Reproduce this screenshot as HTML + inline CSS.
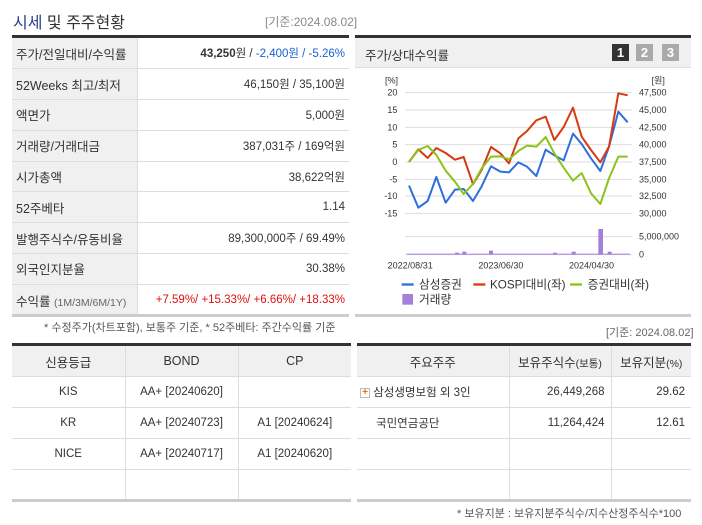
<!DOCTYPE html><html><head><meta charset="utf-8"><style>
*{margin:0;padding:0;box-sizing:border-box}
body{width:702px;height:525px;background:#fff;font-family:"Liberation Sans","Noto Sans CJK KR",sans-serif;font-size:12px;color:#333;position:relative;overflow:hidden}
.a{position:absolute}
table{border-collapse:collapse;position:absolute}
td{border-bottom:1px solid #ddd;height:30.8px;padding:0;white-space:nowrap}
.lt td.l{background:#f0f0f0;border-right:1px solid #ddd;padding-left:4px;font-size:12.5px;color:#333}
.lt td.r{text-align:right;padding-right:4px;font-size:11.5px}
.bt td{text-align:center;border-right:1px solid #ddd;font-size:11.5px}
.bt td:last-child{border-right:none}
.bt tr.h td{background:#f0f0f0;font-size:12.5px}
</style></head><body>
<div class="a" style="left:13px;top:9px;font-size:16px;color:#333"><span style="color:#2a3a8c">시세</span> 및 주주현황</div>
<div class="a" style="left:265px;top:13px;font-size:12px;color:#888">[기준:2024.08.02]</div>
<div class="a" style="left:12px;top:35px;width:337px;height:3px;background:#333"></div>
<table class="lt" style="left:12px;top:38px;width:337px">
<col style="width:125px"><col>
<tr><td class="l">주가/전일대비/수익률</td><td class="r"><b>43,250</b>원 / <span style="color:#1a5fd0">-2,400원 / -5.26%</span></td></tr>
<tr><td class="l">52Weeks 최고/최저</td><td class="r">46,150원 / 35,100원</td></tr>
<tr><td class="l">액면가</td><td class="r">5,000원</td></tr>
<tr><td class="l">거래량/거래대금</td><td class="r">387,031주 / 169억원</td></tr>
<tr><td class="l">시가총액</td><td class="r">38,622억원</td></tr>
<tr><td class="l">52주베타</td><td class="r">1.14</td></tr>
<tr><td class="l">발행주식수/유동비율</td><td class="r">89,300,000주 / 69.49%</td></tr>
<tr><td class="l">외국인지분율</td><td class="r">30.38%</td></tr>
<tr><td class="l" style="border-bottom:none">수익률 <span style="font-size:10.5px;color:#666">(1M/3M/6M/1Y)</span></td><td class="r" style="color:#e01010;border-bottom:none">+7.59%/ +15.33%/ +6.66%/ +18.33%</td></tr>
</table>
<div class="a" style="left:12px;top:314px;width:337px;height:3px;background:#ccc"></div>
<div class="a" style="left:44px;top:319px;font-size:11px;color:#555">* 수정주가(차트포함), 보통주 기준, * 52주베타: 주간수익률 기준</div>

<div class="a" style="left:355px;top:35px;width:336px;height:3px;background:#333"></div>
<div class="a" style="left:355px;top:38px;width:336px;height:30px;background:#f0f0f0;border-bottom:1px solid #ddd"></div>
<div class="a" style="left:365px;top:45px;font-size:12.5px">주가/상대수익률</div>
<div class="a" style="left:612px;top:44px;width:17px;height:17px;background:#333;color:#fff;font-weight:bold;text-align:center;line-height:17px;font-size:13px">1</div>
<div class="a" style="left:636px;top:44px;width:17px;height:17px;background:#aaa;color:#fff;font-weight:bold;text-align:center;line-height:17px;font-size:13px">2</div>
<div class="a" style="left:662px;top:44px;width:17px;height:17px;background:#aaa;color:#fff;font-weight:bold;text-align:center;line-height:17px;font-size:13px">3</div>
<svg class="a" style="left:355px;top:30px" width="347" height="280" viewBox="0 0 1041 840">
<g stroke="#ddd" stroke-width="3">
<line x1="150" x2="830" y1="188" y2="188"/><line x1="150" x2="830" y1="240" y2="240"/><line x1="150" x2="830" y1="292" y2="292"/><line x1="150" x2="830" y1="344" y2="344"/><line x1="150" x2="830" y1="396" y2="396"/><line x1="150" x2="830" y1="448" y2="448"/><line x1="150" x2="830" y1="498" y2="498"/><line x1="150" x2="830" y1="550" y2="550"/><line x1="150" x2="830" y1="620" y2="620"/><line x1="150" x2="830" y1="674" y2="674"/>
</g>
<g fill="#a57fdc">
<rect x="300" y="668" width="12" height="6"/><rect x="322" y="665" width="12" height="9"/><rect x="402" y="662" width="12" height="12"/><rect x="594" y="668" width="12" height="6"/><rect x="650" y="665" width="12" height="9"/><rect x="730" y="597" width="14" height="77"/><rect x="758" y="665" width="12" height="9"/>
<rect x="155" y="671" width="670" height="3"/>
</g>
<g fill="none" stroke-width="6" stroke-linejoin="round">
<polyline stroke="#2e6fde" points="162,467 190,533 218,513 244,441 272,518 300,479 326,477 354,513 380,469 408,409 436,425 462,427 490,397 516,410 544,438 572,359 598,376 626,391 654,311 680,342 708,385 736,423 762,350 790,245 818,277"/>
<polyline stroke="#d63a10" points="162,396 190,358 218,384 244,354 272,369 300,389 326,381 354,463 380,420 408,351 436,370 462,400 490,325 516,303 544,271 572,260 598,330 626,291 654,233 680,320 708,360 736,397 762,350 790,190 818,196"/>
<polyline stroke="#8cc31a" points="162,396 190,360 218,348 244,375 272,422 300,455 326,492 354,462 380,415 408,380 436,379 462,388 490,363 516,347 544,350 572,321 598,370 626,413 654,452 680,429 708,490 736,522 762,445 790,380 818,380"/>
</g>
<g font-size="27" fill="#333" font-family="Liberation Sans,sans-serif">
<text x="90" y="160">[%]</text><text x="890" y="160">[원]</text>
<g text-anchor="end"><text x="127" y="197">20</text><text x="127" y="249">15</text><text x="127" y="301">10</text><text x="127" y="353">5</text><text x="127" y="405">0</text><text x="127" y="457">-5</text><text x="127" y="507">-10</text><text x="127" y="559">-15</text></g>
<text x="852" y="197">47,500</text><text x="852" y="249">45,000</text><text x="852" y="301">42,500</text><text x="852" y="353">40,000</text><text x="852" y="405">37,500</text><text x="852" y="457">35,000</text><text x="852" y="507">32,500</text><text x="852" y="559">30,000</text><text x="852" y="629">5,000,000</text><text x="852" y="682">0</text>
<text x="98" y="716">2022/08/31</text><text x="370" y="716">2023/06/30</text><text x="642" y="716">2024/04/30</text>
</g>
<g font-size="35" fill="#333" font-family="Liberation Sans,Noto Sans CJK KR,sans-serif">
<rect x="140" y="760" width="36" height="7" fill="#2e6fde"/><text x="192" y="776">삼성증권</text>
<rect x="355" y="760" width="36" height="7" fill="#d63a10"/><text x="405" y="776">KOSPI대비(좌)</text>
<rect x="645" y="760" width="36" height="7" fill="#8cc31a"/><text x="698" y="776">증권대비(좌)</text>
<rect x="142" y="792" width="32" height="32" fill="#a57fdc"/><text x="192" y="820">거래량</text>
</g>
</svg>
<div class="a" style="left:355px;top:314px;width:336px;height:3px;background:#ccc"></div>
<div class="a" style="left:606px;top:324px;font-size:11px;color:#666">[기준: 2024.08.02]</div>

<div class="a" style="left:12px;top:343px;width:339px;height:3px;background:#333"></div>
<table class="bt" style="left:12px;top:346px;width:339px">
<col style="width:113px"><col style="width:113px"><col>
<tr class="h"><td>신용등급</td><td>BOND</td><td>CP</td></tr>
<tr><td>KIS</td><td>AA+ [20240620]</td><td></td></tr>
<tr><td>KR</td><td>AA+ [20240723]</td><td>A1 [20240624]</td></tr>
<tr><td>NICE</td><td>AA+ [20240717]</td><td>A1 [20240620]</td></tr>
<tr><td></td><td></td><td></td></tr>
</table>
<div class="a" style="left:12px;top:499px;width:339px;height:3px;background:#ccc"></div>

<div class="a" style="left:357px;top:343px;width:334px;height:3px;background:#333"></div>
<table class="bt" style="left:357px;top:346px;width:334px">
<col style="width:152px"><col style="width:102px"><col>
<tr class="h"><td>주요주주</td><td>보유주식수<span style="font-size:10.5px">(보통)</span></td><td>보유지분<span style="font-size:10.5px">(%)</span></td></tr>
<tr><td style="text-align:left;padding-left:3px"><span style="display:inline-block;width:10px;height:10px;border:1px solid #bbb;color:#f60;font-size:10px;line-height:8px;text-align:center;font-weight:bold;vertical-align:middle">+</span> 삼성생명보험 외 3인</td><td style="text-align:right;padding-right:6px">26,449,268</td><td style="text-align:right;padding-right:6px">29.62</td></tr>
<tr><td style="text-align:left;padding-left:19px">국민연금공단</td><td style="text-align:right;padding-right:6px">11,264,424</td><td style="text-align:right;padding-right:6px">12.61</td></tr>
<tr><td></td><td></td><td></td></tr>
<tr><td></td><td></td><td></td></tr>
</table>
<div class="a" style="left:357px;top:499px;width:334px;height:3px;background:#ccc"></div>
<div class="a" style="left:457px;top:505px;font-size:11px;color:#555">* 보유지분 : 보유지분주식수/지수산정주식수*100</div>
</body></html>
